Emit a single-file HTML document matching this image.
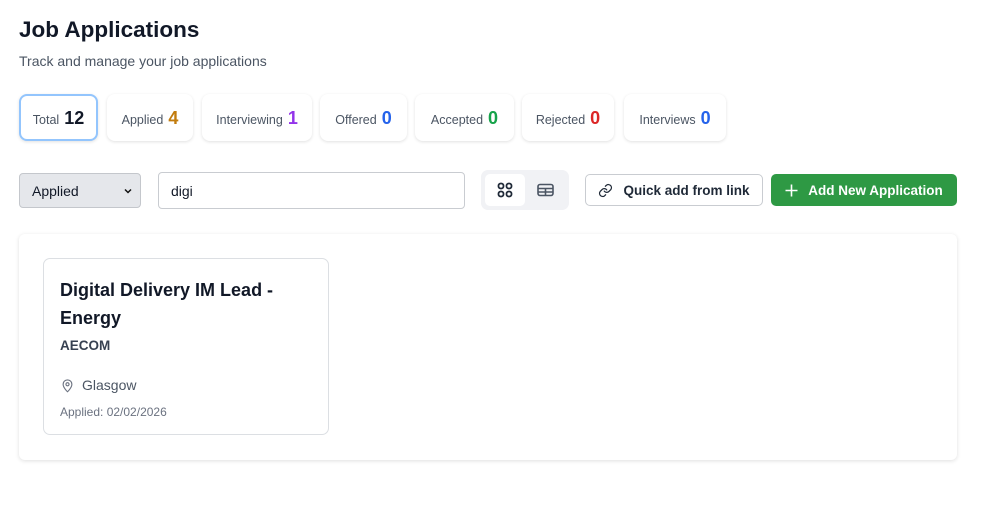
<!DOCTYPE html>
<html><head><style>
*{box-sizing:border-box;margin:0;padding:0}
body{width:984px;height:528px;background:#fff;font-family:"Liberation Sans",sans-serif;color:#111827;position:relative;overflow:hidden}
.a{position:absolute}
.stat{position:absolute;top:94px;height:47px;border-radius:8px;background:#fff;box-shadow:0 1px 3px rgba(0,0,0,.12);display:flex;align-items:center;justify-content:center;font-size:12.5px;color:#4b5563;gap:5px;padding-top:5px}
.stat b{font-size:18px;font-weight:700;margin-top:-3px}
.btn{position:absolute;border-radius:5px;display:flex;align-items:center;justify-content:center;font-size:14px;font-weight:700;gap:10px}
</style></head><body>
<div class="a" style="left:19px;top:17px;font-size:22.5px;font-weight:700;color:#111827">Job Applications</div>
<div class="a" style="left:19px;top:53px;font-size:14px;color:#4b5563">Track and manage your job applications</div>

<div class="stat" style="left:19px;width:79px;border:2px solid #93c5fd">Total <b style="color:#111827">12</b></div>
<div class="stat" style="left:107px;width:86px">Applied <b style="color:#c27c0e">4</b></div>
<div class="stat" style="left:202px;width:110px">Interviewing <b style="color:#9333ea">1</b></div>
<div class="stat" style="left:320px;width:87px">Offered <b style="color:#2563eb">0</b></div>
<div class="stat" style="left:415px;width:99px">Accepted <b style="color:#16a34a">0</b></div>
<div class="stat" style="left:522px;width:92px">Rejected <b style="color:#dc2626">0</b></div>
<div class="stat" style="left:624px;width:102px">Interviews <b style="color:#2563eb">0</b></div>

<div class="a" style="left:19px;top:173px;width:122px;height:35px;background:#e5e7eb;border:1px solid #c4c7cc;border-radius:4px;font-size:14px;padding:9px 12px">Applied<svg style="position:absolute;right:8px;top:14px" width="8" height="6" viewBox="0 0 8 6" fill="none" stroke="#111" stroke-width="1.5"><path d="M1 1.5l3 3 3-3"/></svg></div>
<div class="a" style="left:158px;top:172px;width:307px;height:37px;border:1px solid #c9ccd1;border-radius:4px;font-size:14px;padding:10px 12px">digi</div>
<div class="a" style="left:481px;top:170px;width:88px;height:40px;background:#f1f2f5;border-radius:7px"></div>
<div class="a" style="left:485px;top:174px;width:40px;height:32px;background:#fff;border-radius:5px"></div>
<svg class="a" style="left:497px;top:182px" width="16" height="16" viewBox="0 0 16 16" fill="none" stroke="#1f2937" stroke-width="1.8"><rect x="1.5" y="1.5" width="5" height="5" rx="2.2"/><rect x="9.5" y="1.5" width="5" height="5" rx="2.2"/><rect x="1.5" y="9.5" width="5" height="5" rx="2.2"/><rect x="9.5" y="9.5" width="5" height="5" rx="2.2"/></svg>
<svg class="a" style="left:537px;top:183px" width="17" height="14" viewBox="0 0 17 14" fill="none" stroke="#4b5563" stroke-width="1.6"><rect x="1" y="1.5" width="15" height="11" rx="2"/><path d="M1 5.5h15M1 9h15M8.5 5.5v7"/></svg>

<div class="btn" style="left:585px;top:174px;width:178px;height:32px;border:1px solid #c9ccd1;background:#fff;color:#1f2937;font-size:13.5px"><svg width="15" height="15" viewBox="0 0 24 24" fill="none" stroke="#1f2937" stroke-width="2" stroke-linecap="round"><path d="M10 13a5 5 0 0 0 7.5.5l3-3a5 5 0 0 0-7-7l-1.7 1.7"/><path d="M14 11a5 5 0 0 0-7.5-.5l-3 3a5 5 0 0 0 7 7l1.7-1.7"/></svg>Quick add from link</div>
<div class="btn" style="left:771px;top:174px;width:186px;height:32px;background:#2e9944;color:#fff;font-size:13.5px"><svg width="13" height="13" viewBox="0 0 13 13" stroke="#fff" stroke-width="1.6"><path d="M6.5 0.5v12M0.5 6.5h12"/></svg>Add New Application</div>

<div class="a" style="left:19px;top:234px;width:938px;height:226px;background:#fff;border-radius:6px;box-shadow:0 1px 4px rgba(0,0,0,.13)"></div>
<div class="a" style="left:43px;top:258px;width:286px;height:177px;border:1px solid #dcdfe3;border-radius:7px;padding:17px 16px">
<div style="font-size:18px;font-weight:700;line-height:28px;color:#111827">Digital Delivery IM Lead -<br>Energy</div>
<div style="font-size:13.5px;font-weight:700;color:#374151;margin-top:6px">AECOM</div>
<div style="font-size:14px;color:#4b5563;margin-top:24px;display:flex;align-items:center;gap:7px"><svg width="15" height="15" viewBox="0 0 24 24" fill="none" stroke="#6b7280" stroke-width="1.8"><path d="M12 22s7-6.5 7-12a7 7 0 0 0-14 0c0 5.5 7 12 7 12z"/><circle cx="12" cy="10" r="2.5"/></svg>Glasgow</div>
<div style="font-size:12px;color:#6b7280;margin-top:12px">Applied: 02/02/2026</div>
</div>
</body></html>
